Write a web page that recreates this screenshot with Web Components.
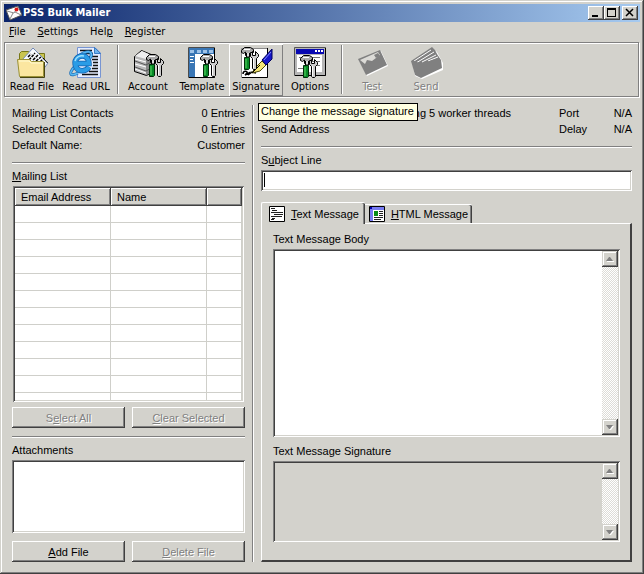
<!DOCTYPE html>
<html lang="en">
<head>
<meta charset="utf-8">
<title>PSS Bulk Mailer</title>
<style>
    html, body {
        margin: 0;
    }
    body {
        --face: #d3d2cc;
        --shadow: #808080;
        --dark: #404040;
        --light: #ffffff;
        --ui-font: "DejaVu Sans Condensed", "DejaVu Sans", sans-serif;
        display: flex;
        flex-direction: column;
        min-height: 100vh;
        background: var(--face);
        color: #000;
        font: 11px/16px "Liberation Sans", Arial, sans-serif;
    }
</style>
</head>
<body>
<mailer-app></mailer-app>

<script>
// Shared base: attaches an open shadow root and fills it from render()
class WinElement extends HTMLElement {
    constructor() {
        super();
        this.attachShadow({ mode: "open" });
    }

    connectedCallback() {
        this.shadowRoot.innerHTML = `<style>
            :host { display: block; box-sizing: border-box; }
            *, *::before { box-sizing: border-box; }
            button, input, textarea { font: inherit; color: inherit; margin: 0; border-radius: 0; outline: none; }
        </style>${this.render()}`;
    }
}

// Hammer and wrench, 18x24, reused by several toolbar icons
const TOOLS = `
    <path d="M0.5 5.5V3.5L3.5 0.5H9.5L12.5 2.5V5.5H9.5V8.5H4.5V5L2.5 6.5Z" fill="#aaa" stroke="#000"/>
    <path d="M3 2.5H9" stroke="#fff"/>
    <path d="M5.5 6V10H8.5V6" fill="#ddd" stroke="#000"/>
    <path d="M9.5 9.5V6.5L11.5 4.5V8.5H14.5V4.5L17.5 7.5V9.5L15.5 11.5V21.5L14.5 22.5H12.5L11.5 21.5V11.5Z" fill="#ccc" stroke="#000"/>
    <path d="M12.5 11V21" stroke="#fff"/>
    <path d="M3.5 10.5H8.5V21.5L7.5 22.5H3.5Z" fill="#078a26" stroke="#002d09"/>
    <path d="M5 12V21" stroke="#5ed867"/>`;

const ICONS = {
    folder: `
        <path d="M3.5 12V6.5L5.5 4.5H12.5L14.5 6.5H28.5V24H3.5Z" fill="#c9c450" stroke="#777719"/>
        <path d="M6 13L17 1L32 16L26 24H8Z" fill="#f7faff" stroke="#7187b4"/>
        <path d="M12 10L15 7M13 13L19 6M17 13L22 8M20 14L25 10M24 15L27 12" stroke="#000" stroke-width="1.5" stroke-dasharray="3 1"/>
        <path d="M31.5 16L27 11" stroke="#000"/>
        <path d="M1.5 12.5H13.5L15.5 14.5H27.5V29.5H3.5Z" fill="#fbe6a0" stroke="#9a9136"/>
        <path d="M3 14H13L15 16H27" stroke="#fffbd2" fill="none"/>
        <path d="M4 30.5H28.5V15" stroke="#484313" fill="none"/>`,
    web: `
        <path d="M7.5 0.5H25L30.5 6V30.5H7.5Z" fill="#e4edff" stroke="#7895d2"/>
        <path d="M24.5 0.5V6.5H30.5Z" fill="#6fb4ee" stroke="#397bc4"/>
        <path d="M10 3.5H22M12 6.5H23M19 9.5H28M22 12.5H28M23 15.5H28M23 18.5H28M22 21.5H28M19 24.5H28M12 27.5H28" stroke="#111" stroke-width="1.5"/>
        <path d="M5 19C-2 27 0 30 8 26M5 13C10 6 19 3 21 6C22 8 21 10 20 11" fill="none" stroke="#1a6fb8" stroke-width="3"/>
        <path d="M5 19C-2 27 0 30 8 26M5 13C10 6 19 3 21 6C22 8 21 10 20 11" fill="none" stroke="#5bbaf2" stroke-width="1.5"/>
        <path d="M8 14.500H15C14 11 9 11 8 14.500Z" fill="#e4f2ff"/>
        <path d="M19 20C16 25 8 25 6 20C3 13 8 9 12 9C17 9 19 13 19 16.500H7" fill="none" stroke="#1260ae" stroke-width="5.500"/>
        <path d="M19 20C16 25 8 25 6 20C3 13 8 9 12 9C17 9 19 13 19 16.500H7" fill="none" stroke="#2a9ce6" stroke-width="4"/>
        <path d="M5 14C6 10 10 8 14 9" fill="none" stroke="#9fe2ff" stroke-width="1.5"/>`,
    account: `
        <path d="M2.5 9.5L9.5 3.5L21.5 8.5V24.5L14.5 28.5L2.5 24.5Z" fill="#b9b9b9" stroke="#000"/>
        <path d="M3 9L10 4L21 9L14 12Z" fill="#eee"/>
        <path d="M14 12L21 9V24L14 28Z" fill="#888"/>
        <path d="M3 14L14 18L21 14M3 20L14 24L21 20" fill="none" stroke="#555"/>
        <path d="M3 12L14 15M3 17L14 20M3 22L14 26" stroke="#fff" fill="none"/>
        <g transform="translate(14 7)">${TOOLS}</g>`,
    template: `
        <path d="M2.5 0.5H28.5V30.5H2.5Z" fill="#fff" stroke="#4c4c4c"/>
        <path d="M3 1H28V7H9V30H3Z" fill="#3976b5"/>
        <path d="M4 3H8V6H4ZM11 3H15V6H11ZM17 3H21V6H17ZM23 3H27V6H23Z" fill="#9fc3e8"/>
        <path d="M4 9.5H8M4 12.5H7M4 15.5H8" stroke="#fff"/>
        <path d="M28.5 1V30.5H3" stroke="#000" fill="none"/>
        <g transform="translate(14 7)">${TOOLS}</g>`,
    signature: `
        <path d="M1.5 1.5H27.5V30.5H1.5Z" fill="#fff" stroke="#888"/>
        <path d="M27.5 1V30.5H2" stroke="#000" fill="none"/>
        <path d="M3 27C3 23 8 24 7 26L5 28L9 26L8 28L12 25L16 26" fill="none" stroke="#000" stroke-width="1.5"/>
        <path d="M12 26L15 21L22 14L26 18L20 24Z" fill="#f5e778" stroke="#4d4906"/>
        <path d="M12 26L20 18" stroke="#000"/>
        <path d="M22 13L32 2V12L26 18Z" fill="#1717c9" stroke="#000060"/>
        <path d="M24 13L31 5" stroke="#858aff"/>
        <g transform="translate(1 0)">${TOOLS}</g>`,
    options: `
        <path d="M0.5 0.5H31.5V28.5H0.5Z" fill="#b6b6b6" stroke="#555"/>
        <path d="M2 2H30V7H2Z" fill="#0808b2"/>
        <path d="M21 3H23V5H21ZM24 3H26V5H24ZM27 3H29V5H27Z" fill="#fff"/>
        <path d="M3 8H28V25H3Z" fill="#fff"/>
        <path d="M5 10.5H26M18 14.5H26M20 18.5H26M4 21.5H10" stroke="#777"/>
        <path d="M31.5 1V28.5H1" stroke="#000" fill="none"/>
        <g transform="translate(6 8)">${TOOLS}</g>`,
    test: `
        <path d="M3 13L25 4L32 19L11 29Z" fill="#fff"/>
        <path d="M2 12L24 3L31 18L10 28Z" fill="#808080"/>
        <path d="M4 13L22 5L24 8L16 14L11 13L9 17Z" fill="#dcdbd7"/>
        <path d="M18 8L22 6L24 9L20 11Z" fill="#808080"/>`,
    send: `
        <path d="M2 15L22 1L27 5L33 16V23L12 32L5 29Z" fill="#fff"/>
        <path d="M1 14L22 0L25 3L27 7L31 13L32 21L11 31L5 28Z" fill="#808080"/>
        <path d="M4 14L21 3M6 16L24 5M12 15L26 8M18 14L28 10" stroke="#fff"/>
        <path d="M2 14L11 18L29 12" fill="none" stroke="#808080" stroke-width="2"/>`,
    mail: `
        <path d="M0 5L12 1L16 10L4 15Z" fill="#fff" stroke="#555"/>
        <path d="M1 6L8 8L12 2M4 14L7 8M15 10L9 7" fill="none" stroke="#888"/>
        <circle cx="10.5" cy="4.5" r="2" fill="#dc1717"/>`,
    textDoc: `
        <path d="M0.5 0.5H15.5V15.5H0.5Z" fill="#fff" stroke="#000"/>
        <path d="M2 2.5H6M3 4.5H8M2 6.5H14M5 8.5H14M2 10.5H13M3 12.5H6M2 13.5H5" stroke="#222"/>`,
    htmlDoc: `
        <path d="M0.5 0.5H15.5V15.5H0.5Z" fill="#fff" stroke="#000"/>
        <path d="M1 1H15V4H4V15H1Z" fill="#777bf1"/>
        <path d="M1 1H3V3H1Z" fill="#0000b0"/>
        <path d="M5 5H9V10H5Z" fill="#078a16"/>
        <path d="M10 5.5H14M10 7.5H14M10 9.5H14M5 11.5H14M5 13.5H12" stroke="#222"/>`
};

const icon = (name, size) =>
    `<svg viewBox="0 0 ${size} ${size}" width="${size}" height="${size}" fill="none" aria-hidden="true">${ICONS[name]}</svg>`;

class TitleBar extends WinElement {
    render() {
        return `<style>
            :host {
                display: flex;
                align-items: center;
                height: 18px;
                padding: 0 2px;
                background: linear-gradient(to right, #0a246a, #a6caf0);
                color: #fff;
                font: bold 11px/16px var(--ui-font);
            }
            svg { display: block; }
            h1 { flex: 1; margin: 0 0 0 1px; font: inherit; }
            button {
                width: 16px;
                height: 14px;
                padding: 0;
                border: 0;
                background: var(--face);
                box-shadow: inset -1px -1px var(--dark), inset 1px 1px var(--light), inset -2px -2px var(--shadow);
            }
            button:last-child { margin-left: 2px; }
        </style>
        ${icon("mail", 16)}
        <h1><slot></slot></h1>
        <button aria-label="Minimize"><svg width="16" height="14"><path d="M4 9H10V11H4Z"/></svg></button>
        <button aria-label="Maximize"><svg width="16" height="14"><path d="M3 2H12V11H3ZM4 4V10H11V4Z" fill-rule="evenodd"/></svg></button>
        <button aria-label="Close"><svg width="16" height="14"><path d="M4 3L11 10M11 3L4 10" stroke="#000" stroke-width="1.5"/></svg></button>`;
    }
}
customElements.define("title-bar", TitleBar);

class MenuBar extends WinElement {
    render() {
        return `<style>
            :host { display: flex; height: 20px; align-items: center; padding-left: 5px; gap: 12px; font: 11px/16px var(--ui-font); }
            ::slotted(button) { padding: 0; border: 0; background: none; font: inherit; color: inherit; }
        </style><slot></slot>`;
    }
}
customElements.define("menu-bar", MenuBar);

class ToolBar extends WinElement {
    render() {
        return `<style>
            :host {
                display: flex;
                margin-right: 1px;
                padding-top: 1px;
                border: 1px solid var(--shadow);
                box-shadow: 1px 1px var(--light), inset 1px 1px var(--light);
                font: 11px/14px var(--ui-font);
            }
        </style><slot></slot>`;
    }
}
customElements.define("tool-bar", ToolBar);

/**
 * ToolButton
 * Attributes: icon, disabled, hot (raised edge), tip (text of the tooltip)
 */
class ToolButton extends WinElement {
    render() {
        const tip = this.getAttribute("tip");
        return `<style>
            :host { position: relative; }
            button {
                display: flex;
                flex-direction: column;
                align-items: center;
                gap: 1px;
                width: 54px;
                height: 52px;
                padding: 3px 0 0;
                border: 0;
                background: none;
                white-space: nowrap;
            }
            svg { display: block; overflow: visible; }
            :host([hot]) button { box-shadow: inset 1px 1px var(--light), inset -1px -1px var(--shadow); }
            button:disabled { color: var(--shadow); text-shadow: 1px 1px var(--light); }
            .tip {
                position: absolute;
                top: 59px;
                left: 29px;
                z-index: 2;
                padding: 0 3px 1px 2px;
                border: 1px solid #000;
                background: #ffffe1;
                font-family: "Liberation Sans", Arial, sans-serif;
                line-height: 15px;
                white-space: nowrap;
            }
        </style>
        <button ${this.hasAttribute("disabled") ? "disabled" : ""}>${icon(this.getAttribute("icon"), 32)}<slot></slot></button>
        ${tip ? `<div class="tip" role="tooltip">${tip}</div>` : ""}`;
    }
}
customElements.define("tool-button", ToolButton);

class EtchedLine extends WinElement {
    render() {
        return `<style>
            :host { flex: none; height: 2px; margin: 8px 0 4px; background: linear-gradient(var(--shadow) 50%, var(--light) 50%); }
            :host([vertical]) { width: 2px; height: auto; margin: 0; background: linear-gradient(to right, var(--shadow) 50%, var(--light) 50%); }
            :host([tool]) { margin: 1px 2px 2px 4px; }
        </style>`;
    }
}
customElements.define("etched-line", EtchedLine);

class InfoRow extends WinElement {
    render() {
        return `<style>
            :host { display: flex; justify-content: space-between; }
        </style><span><slot></slot></span><span>${this.getAttribute("value") || ""}</span>`;
    }
}
customElements.define("info-row", InfoRow);

class PushButton extends WinElement {
    render() {
        return `<style>
            :host { flex: 1; }
            button {
                display: block;
                width: 100%;
                height: 21px;
                padding: 0;
                border: 0;
                background: none;
                box-shadow: inset -1px -1px var(--dark), inset 1px 1px var(--light), inset -2px -2px var(--shadow);
            }
            button:disabled { color: var(--shadow); text-shadow: 1px 1px var(--light); }
        </style>
        <button ${this.hasAttribute("disabled") ? "disabled" : ""}><slot></slot></button>`;
    }
}
customElements.define("push-button", PushButton);

const SUNKEN = `box-shadow: inset 1px 1px var(--shadow), inset -1px -1px var(--light), inset 2px 2px var(--dark), inset -2px -2px var(--face);`;

class ListView extends WinElement {
    render() {
        const columns = this.getAttribute("columns").split(",");
        const head = columns.map((name) => `<th scope="col">${name}</th>`).join("");
        const row = `<tr>${"<td></td>".repeat(columns.length)}</tr>`;
        return `<style>
            :host { flex: 1 1 0; min-height: 120px; margin: 0 1px; padding: 2px; overflow: hidden; background: #fff; ${SUNKEN} }
            .clip { height: 100%; overflow: hidden; }
            table { width: 100%; table-layout: fixed; border-collapse: separate; border-spacing: 0; }
            th {
                height: 18px;
                padding: 0 6px;
                background: var(--face);
                box-shadow: inset -1px -1px var(--dark), inset 1px 1px var(--light), inset -2px -2px var(--shadow);
                font-weight: normal;
                text-align: left;
                line-height: 16px;
            }
            th:last-child { width: 35px; }
            td { height: 17px; padding: 0; border: solid #cfcfca; border-width: 0 1px 1px 0; }
        </style>
        <div class="clip"><table><thead><tr>${head}</tr></thead><tbody>${row.repeat(12)}</tbody></table></div>`;
    }
}
customElements.define("list-view", ListView);

class TextField extends WinElement {
    render() {
        return `<style>
            label { display: block; margin-bottom: 2px; }
            input {
                display: block;
                width: 100%;
                height: 21px;
                padding: 2px 4px;
                border: 0;
                background: linear-gradient(#000, #000) 3px 3px / 1px 14px no-repeat #fff;
                ${SUNKEN}
            }
        </style>
        <label for="field"><slot></slot></label>
        <input id="field" type="text">`;
    }
}
customElements.define("text-field", TextField);

class ScrollTrack extends WinElement {
    render() {
        return `<style>
            :host {
                display: flex;
                flex-direction: column;
                justify-content: space-between;
                width: 16px;
                background: repeating-conic-gradient(#fff 0 25%, #dddcd7 0 50%) 0 0 / 2px 2px;
            }
            button {
                width: 16px;
                height: 16px;
                padding: 0;
                border: 0;
                background: var(--face);
                box-shadow: inset -1px -1px var(--dark), inset 1px 1px var(--face), inset -2px -2px var(--shadow), inset 2px 2px var(--light);
            }
            svg { display: block; }
        </style>
        <button disabled aria-label="Scroll up"><svg width="16" height="16"><path d="M5 10H12V11H5Z" fill="#fff"/><path d="M4 10L7 6H8L11 10Z" fill="#808080"/></svg></button>
        <button disabled aria-label="Scroll down"><svg width="16" height="16"><path d="M5 7H12L9 11H8Z" fill="#fff"/><path d="M4 6H11L8 10H7Z" fill="#808080"/></svg></button>`;
    }
}
customElements.define("scroll-track", ScrollTrack);

/**
 * TextBox - labelled multi-line box
 * Attributes: scroll (shows the scroll bar), readonly (grey face), grow
 */
class TextBox extends WinElement {
    render() {
        const readonly = this.hasAttribute("readonly");
        return `<style>
            :host { display: flex; flex-direction: column; }
            :host([grow]) { flex: 1; }
            label { margin-bottom: 2px; }
            .box {
                display: flex;
                flex: 1;
                min-height: var(--box-height, 73px);
                padding: 2px;
                background: ${readonly ? "var(--face)" : "#fff"};
                ${SUNKEN}
            }
            textarea { display: block; flex: 1; min-width: 0; padding: 1px 2px; border: 0; background: none; resize: none; overflow: hidden; }
        </style>
        <label for="area"><slot></slot></label>
        <div class="box">
            <textarea id="area" rows="1" ${readonly ? "readonly" : ""}></textarea>
            ${this.hasAttribute("scroll") ? "<scroll-track></scroll-track>" : ""}
        </div>`;
    }
}
customElements.define("text-box", TextBox);

class TabPanel extends WinElement {
    render() {
        return `<style>
            :host { display: flex; flex: 1; flex-direction: column; margin-top: 11px; }
            .tabs { display: flex; align-items: flex-end; }
            button {
                display: flex;
                align-items: center;
                gap: 6px;
                height: 19px;
                padding: 0 4px;
                border: solid var(--light);
                border-width: 1px 0 0;
                border-radius: 0 2px 0 0;
                background: var(--face);
                box-shadow: inset -1px 0 var(--dark), inset -2px 0 var(--shadow);
            }
            button[aria-selected="true"] {
                position: relative;
                z-index: 1;
                height: 22px;
                margin-bottom: -1px;
                padding: 0 6px 0 7px;
                border-width: 1px 0 0 1px;
                border-radius: 2px 2px 0 0;
            }
            .panel {
                display: flex;
                flex: 1;
                flex-direction: column;
                gap: 6px;
                padding: 7px 10px 18px 11px;
                border: solid var(--light);
                border-width: 1px 2px 2px 1px;
                border-right-color: var(--dark);
                border-bottom-color: var(--dark);
            }
        </style>
        <div class="tabs" role="tablist">
            <button id="tab-text" role="tab" aria-selected="true" aria-controls="panel">${icon("textDoc", 16)}<span><u>T</u>ext Message</span></button>
            <button role="tab" aria-selected="false">${icon("htmlDoc", 16)}<span><u>H</u>TML Message</span></button>
        </div>
        <div class="panel" id="panel" role="tabpanel" aria-labelledby="tab-text"><slot></slot></div>`;
    }
}
customElements.define("tab-panel", TabPanel);

class MailerApp extends WinElement {
    render() {
        return `<style>
            :host {
                display: flex;
                flex: 1;
                flex-direction: column;
                padding: 4px;
                box-shadow: inset -1px -1px var(--dark), inset 1px 1px var(--face), inset -2px -2px var(--shadow), inset 2px 2px var(--light);
            }
            main { display: grid; grid-template-columns: 233px 2px 1fr; gap: 7px; flex: 1; padding: 8px; }
            .column { display: flex; flex-direction: column; min-width: 0; }
            .info { margin-bottom: 1px; }
            .status { display: grid; grid-template-columns: 250px 1fr 73px; }
            .threads { text-align: right; }
            .status info-row { grid-column: 3; }
            .label { margin-bottom: 2px; }
            .buttons { display: flex; gap: 7px; margin-top: 5px; }
            text-box + .buttons { margin-top: 8px; }
            .signature { --box-height: 81px; }
        </style>
        <title-bar>PSS Bulk Mailer</title-bar>
        <menu-bar>
            <button><u>F</u>ile</button>
            <button><u>S</u>ettings</button>
            <button>Hel<u>p</u></button>
            <button><u>R</u>egister</button>
        </menu-bar>
        <tool-bar>
            <tool-button icon="folder">Read File</tool-button>
            <tool-button icon="web">Read URL</tool-button>
            <etched-line vertical tool></etched-line>
            <tool-button icon="account">Account</tool-button>
            <tool-button icon="template">Template</tool-button>
            <tool-button icon="signature" hot tip="Change the message signature">Signature</tool-button>
            <tool-button icon="options">Options</tool-button>
            <etched-line vertical tool></etched-line>
            <tool-button icon="test" disabled>Test</tool-button>
            <tool-button icon="send" disabled>Send</tool-button>
        </tool-bar>
        <main>
            <section class="column">
                <div class="info">
                    <info-row value="0 Entries">Mailing List Contacts</info-row>
                    <info-row value="0 Entries">Selected Contacts</info-row>
                    <info-row value="Customer">Default Name:</info-row>
                </div>
                <etched-line></etched-line>
                <div class="label"><u>M</u>ailing List</div>
                <list-view columns="Email Address,Name,"></list-view>
                <div class="buttons">
                    <push-button disabled>S<u>e</u>lect All</push-button>
                    <push-button disabled><u>C</u>lear Selected</push-button>
                </div>
                <etched-line></etched-line>
                <text-box>Attachments</text-box>
                <div class="buttons">
                    <push-button><u>A</u>dd File</push-button>
                    <push-button disabled><u>D</u>elete File</push-button>
                </div>
            </section>
            <etched-line vertical></etched-line>
            <section class="column">
                <div class="info status">
                    <span class="threads">ng 5 worker threads</span>
                    <info-row value="N/A">Port</info-row>
                    <span>Send Address</span>
                    <info-row value="N/A">Delay</info-row>
                </div>
                <etched-line></etched-line>
                <text-field>S<u>u</u>bject Line</text-field>
                <tab-panel>
                    <text-box grow scroll>Text Message Body</text-box>
                    <text-box class="signature" scroll readonly>Text Message Signature</text-box>
                </tab-panel>
            </section>
        </main>`;
    }
}
customElements.define("mailer-app", MailerApp);
</script>
</body>
</html>
